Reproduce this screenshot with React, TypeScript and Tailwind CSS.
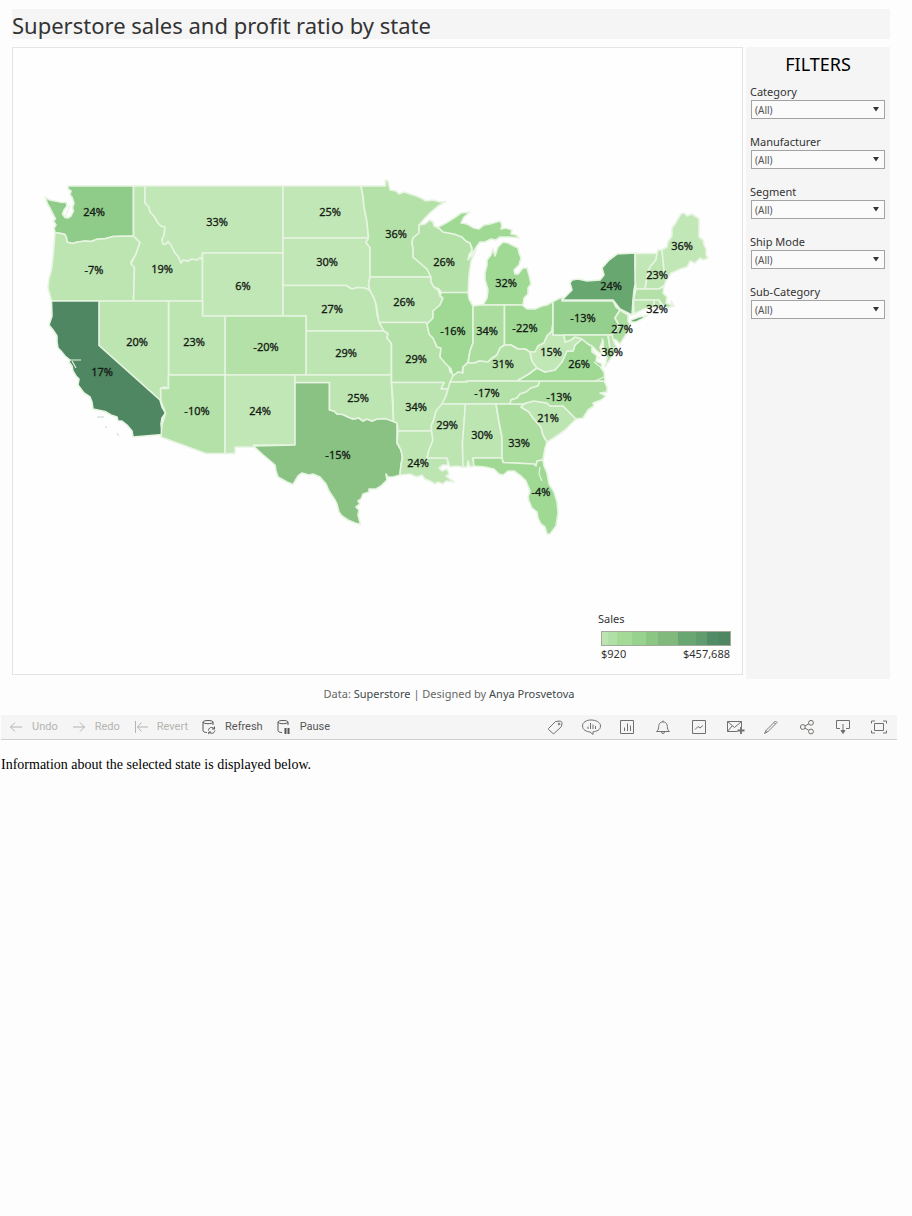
import React from "react";

type State = { id: string; fill: string; d: string };

const L1 = "#c2e7b7";
const L2 = "#bce5b1";
const L3 = "#b4e1a8";
const L4 = "#abdd9f";
const M1 = "#9fd994";

const states: State[] = [
  { id: "WA", fill: "#8fcb89", d: "M68 186H133.5V236L113 236.500L104 239L98 239L91 241.500L85 241L78 242L72 243.500L67 242L66.500 238L65 234.500L61 233.500L55 232.500L54 228L56 225L53.500 221L55.500 219L53 214L50 208L47.500 204L45.500 197.500L50 200L55 201L62 202.500L66 202L67 206L64 210L62.500 214L65 217.500L68 218L71 216L73.500 211L72.500 208L74 203L72 197L70 195L71 191L68 189Z" },
  { id: "OR", fill: L2, d: "M55 232.500L61 233.500L65 234.500L66.500 238L67 242L72 243.500L78 242L85 241L91 241.500L98 239L104 239L113 236.500L133.500 236L140 242.500L138 248L136 254L131 262L132 265L134.500 267L133.500 301H51.500L50 295L48 288L49 279L51.500 270L53 258L54 246Z" },
  { id: "ID", fill: L2, d: "M133.5 186H145V203L149 207L150 212L154 216L158 223L161 226L165 227L164 235L162 240L163 244L166 244L168 241.500L171 245L175 253L178 256L181 263L183 260L188 261L192 259L197 260L200 257.500L202.500 260V301H133.5L134.500 267L131 264L136 254L140 242.500L133.500 236Z" },
  { id: "MT", fill: L1, d: "M145 186H283V253H202.500V260L200 257.500L197 260L192 259L188 261L183 260L181 263L178 256L175 253L171 245L168 241.500L166 244L163 244L162 240L164 235L165 227L161 226L158 223L154 216L150 212L149 207L145 203Z" },
  { id: "WY", fill: L1, d: "M202.500 253H283V316H202.500Z" },
  { id: "ND", fill: L1, d: "M283 186H361L363 196L364 207L367 222L368.500 238H283Z" },
  { id: "SD", fill: L1, d: "M283 238H368.500L366 242.500L370 247.500V277L368.500 285L370 290.500L365 288L357 287.500L352 289L346 285.500H283Z" },
  { id: "NE", fill: L2, d: "M283 285.500H346L352 289L357 287.500L365 288L370 290.500L374 298L376 304L377 315L380 323L384 331H306V316H283Z" },
  { id: "KS", fill: L2, d: "M306 331H384L388 333.500L387 338L391.500 343.500V375H306Z" },
  { id: "CO", fill: L3, d: "M225 316H306V375H225Z" },
  { id: "UT", fill: L2, d: "M168.500 301H202.500V316H225V375H168.500Z" },
  { id: "NV", fill: L2, d: "M99 301H168.500V388L164 387L160.500 388.500L161.500 396L161 401L99 345.500Z" },
  { id: "CA", fill: "#4f8763", d: "M51.500 301H99V345.500L160 400L162 407L165.500 413L162 418L161 424L162 434.500L133 437L132 431L127 425L122 421L118 421L117 417L111 415L105 411.500L93 409L92 402L90 397L84 393L78 385L79 379L76 376L73 371L72 366L69 362L70 360L65 356L61 351L58 348L57 342L57 336L53 330L49 325L52 316Z" },
  { id: "AZ", fill: L3, d: "M168.500 375H225V453.500H206L161 437L162 425L165.500 413L161 401L160.500 388.500H168.500Z" },
  { id: "NM", fill: L1, d: "M225 375H295V445H253.500L254 447H235V453.500H225Z" },
  { id: "TX", fill: "#8ac284", d: "M295 382.500H329.500V410L334 411L337 414L343 414.500L348 417L353 419L359 418L363 421L367 419L372 421L377 419L385 418.500L391 420L397 423V443L401 450L402.500 457L401 465L400 475L393 477L388 477L386 474L387 480L381 486L376 489L369 489L369 492L363 494L361 499L358 501L360 504L356 507L359 510L358 515L360.500 524.500L355 523L348 520L342 516L339 512L337 504L335 500L329 491L326 484L320 477L313 474L309 475L302 473L298 476L293 484.500L287 482L278 477L276 471L275 465L268 459L262 454L253.500 446L295 445Z" },
  { id: "OK", fill: L2, d: "M295 375H391.500V383L393.500 421.500L385 418.500L377 419L372 421L367 419L363 421L359 418L353 419L348 417L343 414.500L337 414L334 411L329.500 410V382.500H295Z" },
  { id: "MN", fill: L3, d: "M361 186H385.500V180L388 181L390 190L396 191L399 194L404 192L410 194L416 196L421 198L426 201L433 200L440 202L446 201.500L438 206L431 212L425 218L419 225V233L413 238L412 243L413 248V257L420 263L427 269L431 277H370V247.500L366 242.500L368.500 238L367 222L364 207L363 196Z" },
  { id: "IA", fill: L2, d: "M370 277H431L431 282L434 287L438 290L440 296L443 298L440 305L433 311L433 318L428 325L426 322.500H379L378 316L376 304L374 298L370 290.500L368.500 285Z" },
  { id: "MO", fill: L3, d: "M379 322.500H426L428 325L429 334L433 338L437 347L441 348L440 357L446 362L449 367L450 372L454 374L452 382L448 389L441 389L444 382.500H391.500V343.500L387 338L388 333.500L384 331Z" },
  { id: "AR", fill: L2, d: "M391.500 382.500H444L441 389H448L446 396L442 405L436 411L434 419L431.500 425V431H398L397 423L393.500 421.500L393 400Z" },
  { id: "LA", fill: L2, d: "M398 431H431.500L433 440L429 450L427 458L447 458L448 465L443 465L439 468L442 471L447 469L449 474L446 476L454 482L446 481L443 484L438 482L435 484L430 481L425 479L422 475L417 477L410 474L400 475L401 465L402.500 457L401 450L397 443Z" },
  { id: "WI", fill: L3, d: "M419 225L425 224L430 220L433 222L434 226L440 229L443 232L454 234L462 237L466 241L470 243L472 250L469 255L468 260L474 253L476 250L471 261L469 275L468 293H441.500L439 289L434 287L431 282V277L427 269L420 263L413 257V248L412 243L413 238L419 233Z" },
  { id: "MI-UP", fill: M1, d: "M438 227L446 223L454 218L461 213L470 212L464 217L461 223L467 224L474 228L479 229L484 225L490 224L500 221L502 225L501 229L506 228L512 230L511 234L516 235L519 238L510 237L500 237L496 240L491 239L485 242L480 242L477 246L472 254L472 248L470 243L466 241L462 237L454 234L443 232L440 229Z" },
  { id: "MI", fill: M1, d: "M503 242L508 243L518 248L519 253L521 258L519 265L514 270L515 274L518 274L523 268L527 268L529 275L531 284L528 288L528 294L524 298L523 305H483L487 298L488 290L485 280L485 273L487 265L487 260L491 255L493 249L495 256L498 247Z" },
  { id: "IL", fill: M1, d: "M441.500 292.500H468L469 299L473 306V343L470 351L468 362L463 367L462 373L458 372L453 376L451 369L445 363L440 357L441 348L437 347L433 338L429 334L427 324L433 318V311L440 305L443 298L440 296Z" },
  { id: "IN", fill: L4, d: "M473 306L480 305H504.500V345L500 348L497 355L491 359L488 362L479 361L475 363L468 363L470 351L473 343Z" },
  { id: "OH", fill: M1, d: "M504.500 305H522L527 309L535 309L542 306L547 305L553 301.500V322L552 331L547 336L544 343L538 346L535 352L530 352L525 349L518 349L511 345H504.500Z" },
  { id: "KY", fill: L3, d: "M450 382L453 376L458 372L463 373L463 367L468 363L475 363L479 361L488 362L491 359L497 355L500 348L504.500 345H511L518 349L525 349L530 352L532 361L537 368L529 374L517 381H467V382Z" },
  { id: "TN", fill: L3, d: "M450 382H467V381H540L538 386L531 388L526 392L520 394L517 398L511 400L510 404H442L446 396L448 389Z" },
  { id: "MS", fill: L2, d: "M442 404H465.500L462.500 443L463 467L456 466L450 467L447 458H427L429 450L433 440L431.500 431V425L434 419L436 411Z" },
  { id: "AL", fill: L2, d: "M465.500 404H496L499 422L502 437V458H473L474 466L470 467L468 461L467 467H463L462.500 443Z" },
  { id: "GA", fill: L4, d: "M496 404H524L521 407L529 412L533 418L541 427L543 435L547 442L545 448L543 460L537 461L536 466L534 464L503 462.500L502 458V437L499 422Z" },
  { id: "FL", fill: M1, d: "M473 458H502L503 462.500L534 464L536 466L537 461L543 460L544 466L547 473L549 484L554 492L557 502L558 513L556 526L550 534L547 534L545 527L541 524L538 518L537 512L532 508L529 501L528 497L530 491L526 481L521 476L514 471L508 471L503 475L499 474L494 469L485 467L474 466Z" },
  { id: "SC", fill: L2, d: "M521 407L526 403L534 401L547 403L550 406H563L576 419L571 424L565 430L558 435L552 439L547 442L543 435L541 427L533 418L529 412Z" },
  { id: "NC", fill: L4, d: "M540 381H604L607 387L607 392L600 393L606 396L601 400L593 403L594 406L588 410L583 418L576 419L563 406H550L547 403L534 401L526 403L524 404H510L511 400L517 398L520 394L526 392L531 388L538 386Z" },
  { id: "VA", fill: M1, d: "M517 381L529 374L537 368L545 372L555 370L562 362L567 351L573 351L575 345L582 339L588 344L592 346L592 352L597 356L596 361L602 364L601 368L604 372L605 381Z" },
  { id: "WV", fill: L1, d: "M553 323V335H564L565 342L571 340L575 337L579 338L582 339L575 345L573 351L567 351L562 362L555 370L545 372L537 368L532 361L530 352L535 352L538 346L544 343L547 336L552 331Z" },
  { id: "PA", fill: "#95cf8d", d: "M553 301.500L562 297V301H613L616 307L620 310L615 318L619 325L615 331L612 335H553Z" },
  { id: "NY", fill: "#68a770", d: "M562 300L567 295L572 290L570 283L572 280L578 279L587 281L600 280L604 275L602 268L609 260L617 254L635 253L635 267L636 280L634 290L633 300L632 315L620 309L613 300Z" },
  { id: "NY-LI", fill: "#68a770", d: "M631 320L639 317L648 315L642 319L636 322L631 322Z" },
  { id: "VT", fill: L1, d: "M635.500 253.500H657L656 260L650 267L647 278L645 289H636L635 280Z" },
  { id: "NH", fill: L2, d: "M657 253.500L658 250L662 250L664 270L666 281L664 286L659 289H645L647 278L650 267L656 260Z" },
  { id: "ME", fill: L1, d: "M662 250L667 247L668 242L672 236L672 228L675 224L681 214L684 213L687 216L692 214L699 219V237L703 240L704 245L706 249L706 255L708 258L703 260L700 258L695 263L690 261L687 267L680 269L676 271L671 273L666 281L664 270Z" },
  { id: "MA", fill: L3, d: "M636 289H659L664 286L663 293L667 297L666 303L672 305L671 301L674 306L665 308L659 300H633.500Z" },
  { id: "CT", fill: L2, d: "M633.500 300H654V307L644 309L634 314Z" },
  { id: "RI", fill: L2, d: "M654 300H659L661 306L654 308Z" },
  { id: "NJ", fill: L4, d: "M620 310L628 315L628 321L630 324L627 333L620 344L616 340L612 339L612 335L615 331L619 325L615 318Z" },
  { id: "MD", fill: L4, d: "M564 335H608L610 348L617 348L613 355L605 367L607 358L604 352L603 340L600 347L602 354L598 352L592 346L588 344L582 339L579 338L575 337L571 340L565 342Z" },
  { id: "DE", fill: L2, d: "M608 335H612L614 342L617 348H610Z" },
];

const labels: [string, number, number][] = [
  ["24%", 94, 212], ["33%", 217, 222], ["25%", 330, 212], ["36%", 396, 234],
  ["-7%", 94, 270], ["19%", 162, 269], ["6%", 243, 286], ["30%", 327, 262],
  ["26%", 444, 262], ["32%", 506, 283], ["27%", 332, 309], ["26%", 404, 302],
  ["20%", 137, 342], ["23%", 194, 342], ["-20%", 266, 347], ["29%", 346, 353],
  ["29%", 416, 359], ["-16%", 453, 331], ["34%", 487, 331], ["-22%", 525, 328],
  ["-13%", 583, 318], ["24%", 611, 286], ["36%", 682, 246], ["23%", 657, 275],
  ["32%", 657, 309], ["27%", 622, 329], ["36%", 612, 352], ["15%", 551, 352],
  ["26%", 579, 364], ["31%", 503, 364], ["17%", 102, 372], ["-10%", 197, 411],
  ["24%", 260, 411], ["25%", 358, 398], ["34%", 416, 407], ["-17%", 487, 393],
  ["-13%", 559, 397], ["21%", 548, 418], ["29%", 447, 425], ["30%", 482, 435],
  ["33%", 519, 443], ["-15%", 338, 455], ["24%", 418, 463], ["-4%", 541, 492],
];

const ramp: [string, number][] = [
  ["#bbe4b0", 6], ["#b1e0a6", 9], ["#a2da96", 15], ["#97d28e", 14],
  ["#8cc684", 12], ["#81b97c", 20], ["#69a772", 18], ["#609c6d", 11], ["#528c66", 11], ["#4f8763", 12],
];

function UsMap() {
  return (
    <svg viewBox="13 48 729 626" className="block w-full" role="img" aria-label="Profit ratio by state">
      <g stroke="#e6f4e1" strokeWidth="1.6" strokeLinejoin="round">
        {states.map((s) => (
          <path key={s.id} d={s.d} fill={s.fill} />
        ))}
      </g>
      <g fill="none" stroke="#e6f4e1" strokeWidth="1.2">
        <path d="M70 360H81M72 361L76 368M65 217L68 210L70 205" />
        <path d="M540 467L539 474L542 481" />
        <path d="M595 381L604 377M594 362L603 369M592 350L600 359M602 338L604 352" />
      </g>
      <g fill="none" stroke="#c5d8c8" strokeWidth="1">
        <path d="M97 417H104M105 426L107 428M117 433L119 436" />
      </g>
      <g className="font-['Noto_Sans',sans-serif] text-[11px]" fill="#141a14" stroke="#141a14" strokeWidth="0.3" textAnchor="middle">
        {labels.map(([t, x, y]) => (
          <text key={`${x}-${y}`} x={x} y={y + 4}>{t}</text>
        ))}
      </g>
    </svg>
  );
}

function Filter({ name }: { name: string }) {
  return (
    <label className="block h-[50px] pl-1 pr-[5px] text-[11px] leading-4 text-[#333]">
      {name}
      <span className="relative ml-px block">
        <select className="block h-[19px] w-full appearance-none border border-[#a3a3a3] bg-[#fbfbfb] pl-[3px] text-[10px] leading-4 text-[#555] outline-none">
          <option>(All)</option>
        </select>
        <svg className="pointer-events-none absolute right-[6px] top-[7px]" width="6" height="5" viewBox="0 0 6 5" fill="#333">
          <path d="M0 0H6L3 4.500Z" />
        </svg>
      </span>
    </label>
  );
}

function Icon({ children, w = 16 }: { children: React.ReactNode; w?: number }) {
  return (
    <svg width={w} height="16" viewBox={`0 0 ${w} 16`} fill="none" stroke="currentColor" strokeWidth="1" aria-hidden="true">
      {children}
    </svg>
  );
}

const cylinder = <path d="M5 13.500C2.500 13.500 1 12.700 1 11.500V3C1 1 11 1 11 3V6M1 3C1 5.300 11 5.300 11 3" />;

const leftTools: { name: string; off?: boolean; icon: React.ReactNode }[] = [
  { name: "Undo", off: true, icon: <path d="M13 8H1.500M6 3.500L1.500 8L6 12.500" /> },
  { name: "Redo", off: true, icon: <path d="M1 8H12.500M8 3.500L12.500 8L8 12.500" /> },
  { name: "Revert", off: true, icon: <path d="M1.500 2V14M14 8H3.500M7.500 3.500L3.500 8L7.500 12.500" /> },
  {
    name: "Refresh",
    icon: (
      <>
        {cylinder}
        <path d="M6.500 11.500C6.500 8.500 10 7.500 12 9.500M12.500 7.500V10H10M12.800 11.500C12.500 14.500 9 15 7.300 13.200M6.800 15.200V13H9" />
      </>
    ),
  },
  {
    name: "Pause",
    icon: (
      <>
        {cylinder}
        <path strokeWidth="2" d="M8.500 9V15M11.500 9V15" />
      </>
    ),
  },
];

const rightTools: { name: string; icon: React.ReactNode }[] = [
  { name: "Tags", icon: <><path d="M1.500 9.500L8.500 2.500L13.500 2L15 3.500L14.500 7.500L7 14.500Q6.500 15 6 14.500L1.500 10.500Z" /><circle cx="12" cy="5" r="0.900" /></> },
  { name: "Ask data", icon: <><path d="M8 1C3.500 1 -0.500 3.200 -0.500 7S3.500 12.800 7 12.900L10 15.500V12.800C13.500 12.500 17.500 11 17.500 7S12.500 1 8 1Z" /><path d="M5 10V7.500M7.500 10V4M10 10V5.500M12.500 10V7" /></> },
  { name: "Workbook", icon: <><path d="M1.500 1.500H14.500V14.500H1.500Z" /><path d="M5.500 12V8.500M8.500 12V4.500M11.500 12V6.500" /></> },
  { name: "Alerts", icon: <><path d="M1.500 12.500H14.500C12.500 11 12.500 9.500 12.300 7.500C12 4 10.500 3 8 3S4 4 3.700 7.500C3.500 9.500 3.500 11 1.500 12.500ZM8 3V1.500" /><path d="M6.500 13C6.500 15 9.500 15 9.500 13" /></> },
  { name: "Metrics", icon: <><path d="M1.500 1.500H14.500V14.500H1.500Z" /><path d="M4 10.500L7 7.500L9 9L12 6.500" /></> },
  { name: "Subscribe", icon: <><path d="M10.500 12.500H0.500V2.500H14.500V8M0.500 2.500L7.500 8.500L14.500 2.500M0.500 12.500L5 7" /><path strokeWidth="1.800" d="M14 8V15M10.500 11.500H17.500" /></> },
  { name: "Edit", icon: <path strokeWidth="0.900" d="M1.500 14.500L3 11.500L12.500 2L14 3.500L4.500 13ZM11 3.500L12.500 5M3 11.500L4.500 13" /> },
  { name: "Share", icon: <><circle cx="3.800" cy="8" r="2.400" /><circle cx="12" cy="3.800" r="2.400" /><circle cx="12" cy="12.500" r="2.400" /><path d="M6 6.900L9.800 4.900M6 9.200L9.800 11.300" /></> },
  { name: "Download", icon: <><path d="M5 9.500H1.500V1.500H14.500V9.500H11M8 5V13" /><path fill="currentColor" d="M6 11.500H10L8 14.500Z" /></> },
  { name: "Full screen", icon: <path d="M3.500 4.500H12.500V11.500H3.500ZM0.500 4.500V2H4M12 2H15.500V4.500M15.500 11.500V14H12M4 14H0.500V11.500" /> },
];

export default function App() {
  return (
    <div className="min-h-screen bg-[#fdfdfd] font-['Noto_Sans',sans-serif]">
      <main className="pl-3 pr-[22px] pt-[9px]">
        <h1 className="h-[30px] bg-[#f5f5f5] text-[22px] leading-8 text-[#333]">Superstore sales and profit ratio by state</h1>
        <div className="mt-2 flex gap-[3px]">
          <section className="relative mb-1 flex-1 self-start border border-[#e4e4e4] bg-[#fefefe]">
            <UsMap />
            <div className="absolute bottom-3 right-[11px] w-[133px] text-[11px] leading-4 text-[#333]">
              <p>Sales</p>
              <div className="ml-[3px] mt-1 flex h-[15px] border border-[#a3aa9c]">
                {ramp.map(([c, w]) => (
                  <span key={c} style={{ background: c, flexGrow: w }} />
                ))}
              </div>
              <p className="ml-[3px] flex justify-between pr-px">
                <span>$920</span>
                <span>$457,688</span>
              </p>
            </div>
          </section>
          <aside className="w-36 bg-[#f5f5f5]">
            <h2 className="mb-1 h-[33px] pt-1 text-center text-[18px] leading-[26px] text-black">FILTERS</h2>
            <Filter name="Category" />
            <Filter name="Manufacturer" />
            <Filter name="Segment" />
            <Filter name="Ship Mode" />
            <Filter name="Sub-Category" />
          </aside>
        </div>
      </main>
      <p className="h-9 pr-[14px] pt-[7px] text-center text-[11px] leading-4 text-[#666]">
        Data: <a href="#superstore" className="text-[#3d4a4a]">Superstore</a> | Designed by{" "}
        <a href="#designer" className="text-[#3d4a4a]">Anya Prosvetova</a>
      </p>
      <div className="ml-px mr-[15px] flex h-[25px] items-center justify-between border-b border-[#cfcfcf] bg-[#f5f5f5] font-[Roboto,sans-serif] text-[11px]">
        <div className="flex pl-px">
          {leftTools.map((t) => (
            <button
              key={t.name}
              disabled={t.off}
              className={t.off ? "flex items-center gap-2 px-[7px] text-[#b4b4b0]" : "flex items-center gap-2 px-[7px] text-[#555]"}
            >
              <Icon w={15}>{t.icon}</Icon>
              <span>{t.name}</span>
            </button>
          ))}
        </div>
        <div className="flex text-[#70706c]">
          {rightTools.map((t) => (
            <button key={t.name} aria-label={t.name} className="flex w-9 justify-center [&_svg]:overflow-visible">
              <Icon>{t.icon}</Icon>
            </button>
          ))}
        </div>
      </div>
      <p className="ml-px mt-[15px] font-['Liberation_Serif',serif] text-[14px] leading-5 text-black">
        Information about the selected state is displayed below.
      </p>
    </div>
  );
}
